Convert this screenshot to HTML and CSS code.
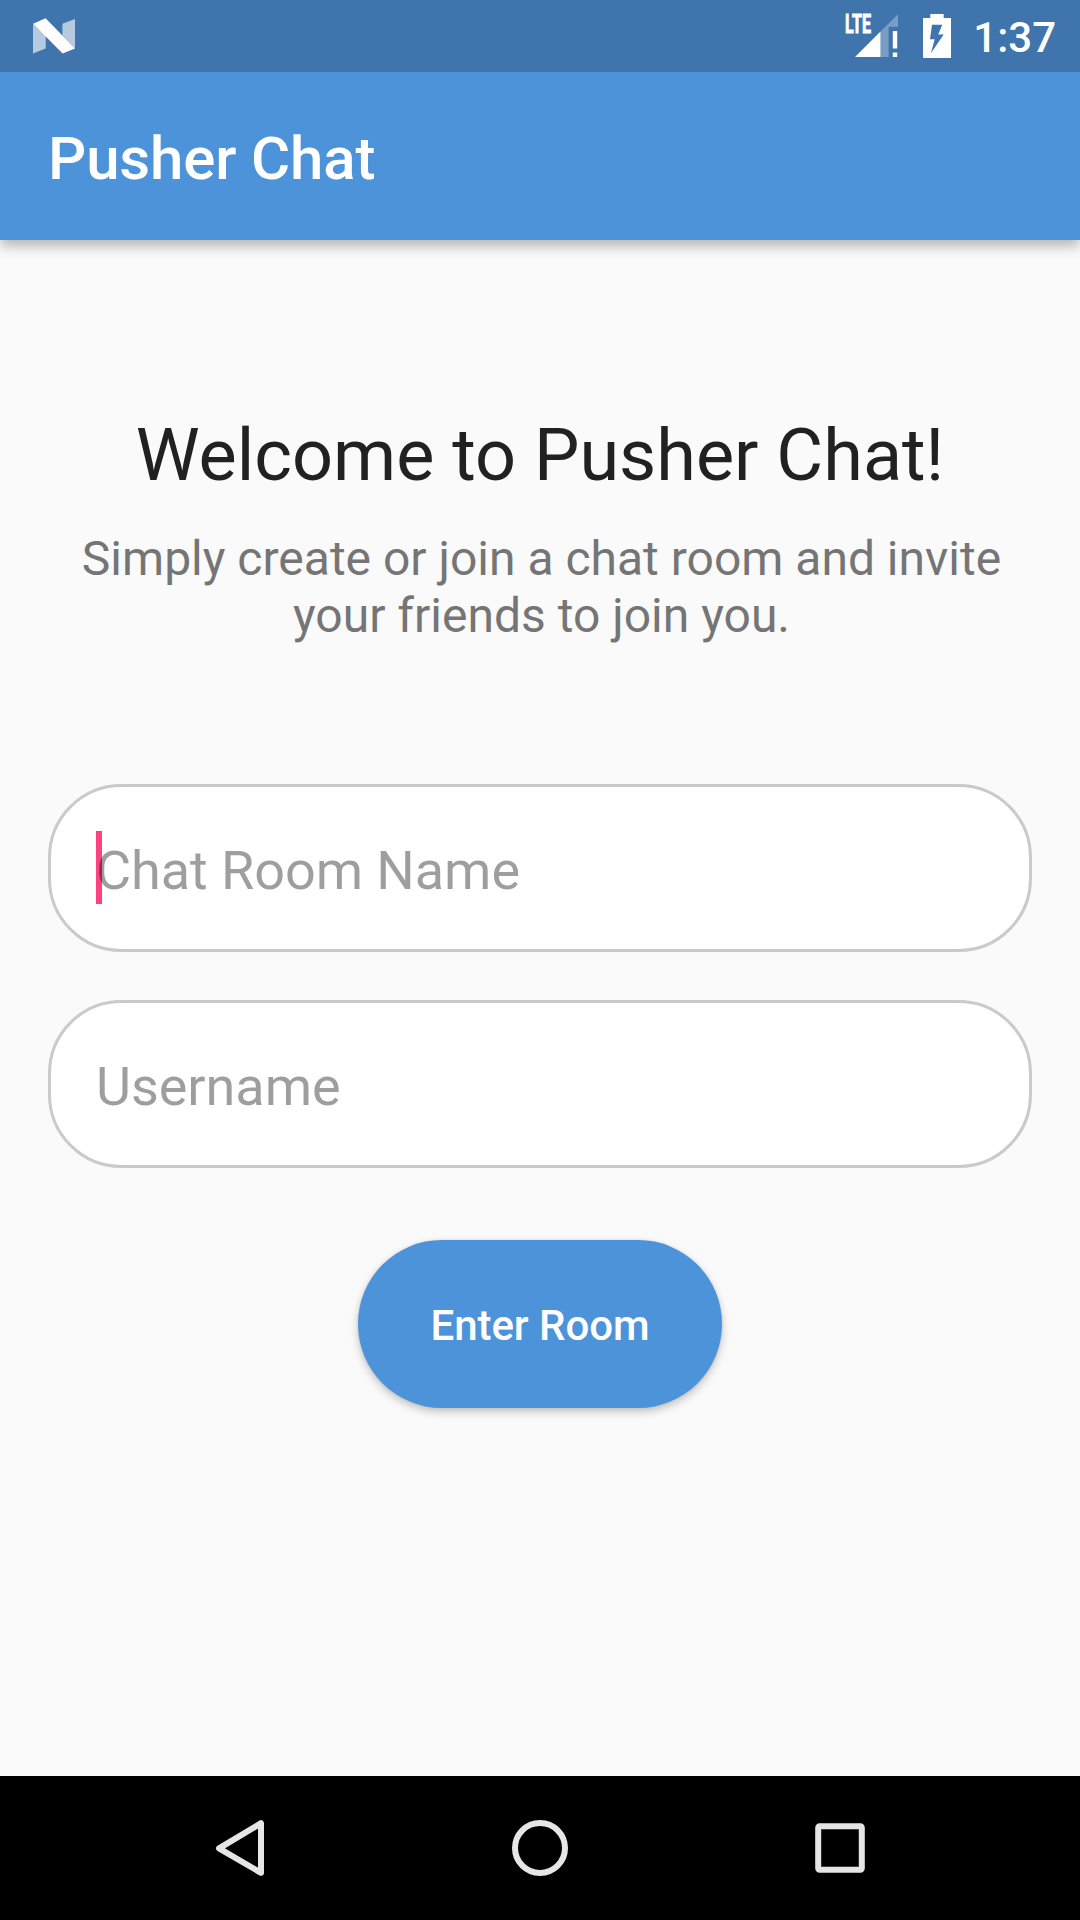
FILE: index.html
```html
<!DOCTYPE html>
<html lang="en">
<head>
<meta charset="utf-8">
<title>Pusher Chat</title>
<link rel="stylesheet" href="styles.css">
</head>
<body>
<div class="screen">
  <div class="status-bar">
    <svg class="logo" viewBox="0 0 44 36" width="44" height="36" aria-hidden="true">
      <path class="faded" d="M1 6V35.5L13.7 30.5V18ZM30.4 5.8L43 1V30.5L30.4 17.5Z"/>
      <path d="M1 5.8L13.6.3L43 30.5L30.6 35.4Z"/>
    </svg>
    <div class="status-icons">
      <svg class="signal" viewBox="0 -8 54 52" width="54" height="52" aria-hidden="true">
        <text class="lte" x="1" y="19.4" textLength="26" lengthAdjust="spacingAndGlyphs">LTE</text>
        <path d="M11 43L36.5 17.5V43Z"/>
        <path class="dim" d="M36.5 17.5L54 .3V12.8H44.6V43H36.5Z"/>
        <path d="M48.8 17H53.2V34.4H48.8ZM48.8 38.6H53.2V43H48.8Z"/>
      </svg>
      <svg class="battery" viewBox="0 0 28 44" width="28" height="44" aria-hidden="true">
        <path fill-rule="evenodd" d="M7.3 0H20.7V4H28V44H0V4H7.3ZM9 10.7L7 25.2H11.7L7.9 39.3L20.7 20.6H15.2L19.3 10.7Z"/>
      </svg>
      <span class="clock">1:37</span>
    </div>
  </div>
  <header class="app-bar"><h1>Pusher Chat</h1></header>
  <main class="content">
    <h2>Welcome to Pusher Chat!</h2>
    <p class="intro">Simply create or join a chat room and invite<br>your friends to join you.</p>
    <div class="fields">
      <div class="field focused"><span>Chat Room Name</span></div>
      <div class="field"><span>Username</span></div>
    </div>
    <button class="enter" type="button">Enter Room</button>
  </main>
  <nav class="nav-bar">
    <svg viewBox="0 0 60 60" width="60" height="60" aria-hidden="true"><path d="M9 30.3L51 5.2V54.8Z"/></svg>
    <svg viewBox="0 0 60 60" width="60" height="60" aria-hidden="true"><circle cx="30" cy="30" r="25"/></svg>
    <svg viewBox="0 0 60 60" width="60" height="60" aria-hidden="true"><rect x="8.2" y="8.2" width="43.6" height="43.6" rx="1.5"/></svg>
  </nav>
</div>
</body>
</html>
```
FILE: styles.css
```css
* { box-sizing: border-box; margin: 0; padding: 0; }

body {
  font-family: Roboto, sans-serif;
  background: #fafafa;
}

.screen {
  display: flex;
  flex-direction: column;
  width: 1080px;
  height: 1920px;
  overflow: hidden;
}

.status-bar {
  position: relative;
  z-index: 1;
  display: flex;
  flex: none;
  justify-content: space-between;
  align-items: flex-start;
  height: 72px;
  padding: 0 24px 0 32px;
  background: #3f74ac;
  color: #fff;
  fill: #fff;
}

.logo { margin-top: 18px; }
.faded { opacity: .62; }
.dim { opacity: .3; }

.status-icons {
  display: flex;
  align-items: flex-start;
}

.signal { margin: 6px 25px 0 0; }
.battery { margin: 14px 22px 0 0; }

.lte {
  font: 700 26px Roboto, sans-serif;
  stroke: #fff;
  stroke-width: .9px;
}

.clock {
  margin-top: 13px;
  font-size: 42px;
  font-weight: 500;
  line-height: 49px;
}

.app-bar {
  position: relative;
  flex: none;
  height: 168px;
  padding: 51px 48px 0;
  background: #4d93d9;
  color: #fff;
  box-shadow: 0 6px 12px rgba(0, 0, 0, .28);
}

.app-bar h1 {
  font-size: 60px;
  font-weight: 500;
  line-height: 71px;
  letter-spacing: -.15px;
}

.content {
  display: flex;
  flex: 1;
  flex-direction: column;
  align-items: center;
  padding: 173px 48px 0;
}

h2 {
  font-size: 72px;
  font-weight: 400;
  line-height: 85px;
  color: #212121;
}

.intro {
  margin-top: 32px;
  padding-left: 3px;
  font-size: 48px;
  line-height: 57px;
  text-align: center;
  white-space: nowrap;
  color: #757575;
}

.fields {
  display: grid;
  gap: 48px;
  width: 100%;
  margin-top: 140px;
}

.field {
  position: relative;
  height: 168px;
  padding: 52px 45px 0;
  border: 3px solid #cacaca;
  border-radius: 73.5px;
  background: #fff;
  font-size: 54px;
  line-height: 63px;
  letter-spacing: -.06px;
  color: rgba(0, 0, 0, .38);
}

.field span { position: relative; }

.focused::before {
  content: "";
  position: absolute;
  top: 44px;
  left: 45px;
  width: 6px;
  height: 73px;
  background: #ff4081;
}

.enter {
  width: 364px;
  height: 168px;
  margin-top: 72px;
  padding: 3px 0 0;
  border: 0;
  border-radius: 84px;
  background: #4d93d9;
  box-shadow: 0 4px 8px rgba(0, 0, 0, .22), 0 0 3px rgba(0, 0, 0, .1);
  font: 500 42px/45px Roboto, sans-serif;
  letter-spacing: -.05px;
  color: #fff;
}

.nav-bar {
  display: flex;
  flex: none;
  justify-content: center;
  align-items: center;
  gap: 240px;
  height: 144px;
  background: #000;
  fill: none;
  stroke: #e6e6e6;
  stroke-width: 6;
  stroke-linejoin: round;
}
```
